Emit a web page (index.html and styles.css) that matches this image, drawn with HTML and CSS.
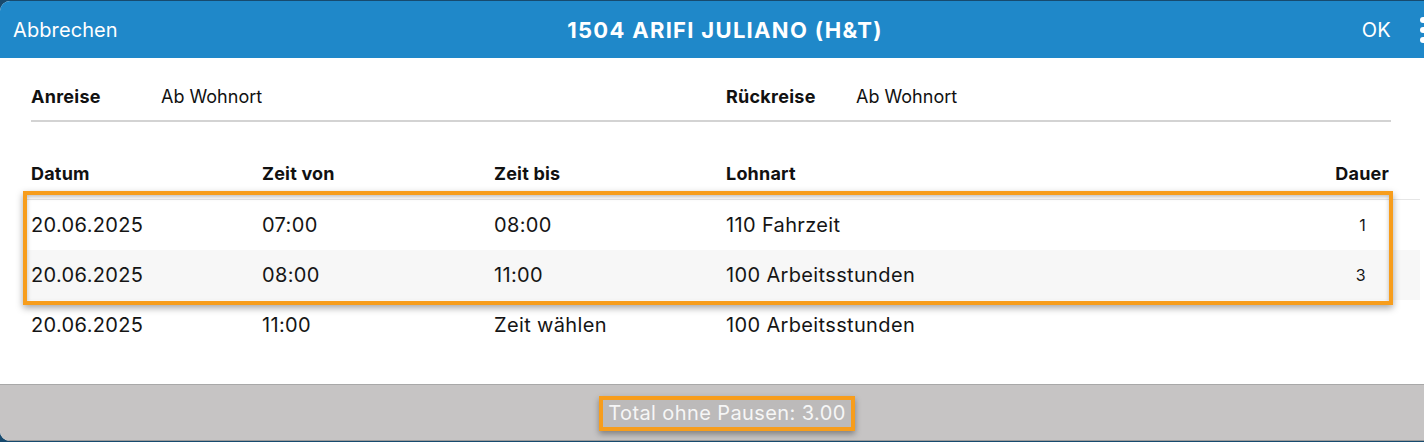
FILE: index.html
```html
<!DOCTYPE html>
<html lang="de">
<head>
<meta charset="utf-8">
<title>1504 ARIFI JULIANO (H&amp;T)</title>
<link rel="stylesheet" href="styles.css">
</head>
<body>
<div class="modal">
  <header class="topbar">
    <span class="cancel">Abbrechen</span>
    <h1 class="title">1504 ARIFI JULIANO (H&amp;T)</h1>
    <span class="ok">OK</span>
    <svg class="kebab" width="10" height="40" viewBox="0 0 10 40"><circle cx="7" cy="9" r="3"/><circle cx="7" cy="19" r="3"/><circle cx="7" cy="29" r="3"/></svg>
  </header>
  <main class="content">
    <div class="travel">
      <div class="travel-item"><span class="label">Anreise</span><span class="value">Ab Wohnort</span></div>
      <div class="travel-item"><span class="label">Rückreise</span><span class="value">Ab Wohnort</span></div>
    </div>
    <div class="table">
      <div class="row head">
        <span>Datum</span><span>Zeit von</span><span>Zeit bis</span><span>Lohnart</span><span class="num">Dauer</span>
      </div>
      <div class="rows">
        <div class="row">
          <span>20.06.2025</span><span>07:00</span><span>08:00</span><span>110 Fahrzeit</span><span class="num small">1</span>
        </div>
        <div class="row alt">
          <span>20.06.2025</span><span>08:00</span><span>11:00</span><span>100 Arbeitsstunden</span><span class="num small">3</span>
        </div>
        <div class="row">
          <span>20.06.2025</span><span>11:00</span><span>Zeit wählen</span><span>100 Arbeitsstunden</span><span class="num small"></span>
        </div>
        <div class="highlight"></div>
      </div>
    </div>
  </main>
  <footer class="footer">
    <span class="total">Total ohne Pausen: 3.00</span>
  </footer>
</div>
</body>
</html>
```

FILE: styles.css
```css
* { box-sizing: border-box; }
html, body { margin: 0; padding: 0; }
body {
  background: #174a6e;
  font-family: Inter, "Noto Sans", "Liberation Sans", sans-serif;
  width: 1424px;
  height: 442px;
  overflow: hidden;
}
.modal {
  margin-top: 1px;
  width: 1440px;
  height: 440px;
  background: #fff;
  border-radius: 10px 0 0 10px;
  overflow: hidden;
  display: flex;
  flex-direction: column;
}
.topbar {
  height: 57px;
  background: #1f88c9;
  color: #fff;
  display: flex;
  align-items: center;
  position: relative;
  padding-left: 13px;
  flex: none;
}
.cancel { font-size: 20px; letter-spacing: 0.1px; }
.title {
  position: absolute;
  left: 13px;
  width: 1424px;
  text-align: center;
  margin: 0;
  font-size: 22px;
  font-weight: 700;
  letter-spacing: 1.3px;
  pointer-events: none;
}
.ok { margin-left: auto; margin-right: 49px; font-size: 20px; letter-spacing: 0.3px; }
.kebab { fill: #fff; position: absolute; left: 1416px; top: 10px; }
.content { flex: 1; padding: 0 0 0 31px; }
.travel {
  width: 1360px;
  display: grid;
  grid-template-columns: 695px 1fr;
  padding: 27px 0 11px;
  border-bottom: 2px solid #d3d3d3;
  font-size: 18px;
  line-height: 24px;
  color: #111;
}
.travel-item { display: flex; }
.label { font-weight: 700; width: 130px; letter-spacing: 0.25px; }
.table { margin-left: -8px; margin-top: 40px; width: 1397px; }
.row {
  display: grid;
  grid-template-columns: 231px 232px 232px 1fr 120px;
  padding: 0 31px 0 8px;
  height: 50px;
  align-items: center;
  font-size: 20px;
  letter-spacing: 0.35px;
  color: #151515;
}
.row.head {
  height: 38px;
  align-items: start;
  line-height: 24px;
  font-size: 18px;
  letter-spacing: 0.2px;
  font-weight: 700;
  color: #111;
  border-bottom: 1px solid #e6e6e6;
}
.row.alt { background: #f7f7f7; }
.num { text-align: right; }
.num.small { font-size: 16px; padding-right: 23px; }
.rows { position: relative; }
.highlight {
  position: absolute;
  left: 0;
  top: -9px;
  width: 1370px;
  height: 114px;
  border: 4px solid #f79d1c;
  box-shadow: 0 3px 7px rgba(0,0,0,0.35), inset 0 2px 4px rgba(0,0,0,0.25);
}
.footer {
  flex: none;
  height: 57px;
  background: #c6c4c4;
  border-top: 1px solid #a8a8a8;
  border-bottom: 1px solid #9a9a9a;
  display: flex;
  justify-content: center;
  padding-left: 14px;
  padding-top: 11px;
}
.total {
  align-self: flex-start;
  height: 35px;
  padding: 0 5px 0 5px;
  font-size: 20px;
  letter-spacing: 0.4px;
  line-height: 27px;
  color: #f6f6f6;
  background: #bcbaba;
  border: 4px solid #f79d1c;
  box-shadow: 0 3px 6px rgba(0,0,0,0.35);
}
```
